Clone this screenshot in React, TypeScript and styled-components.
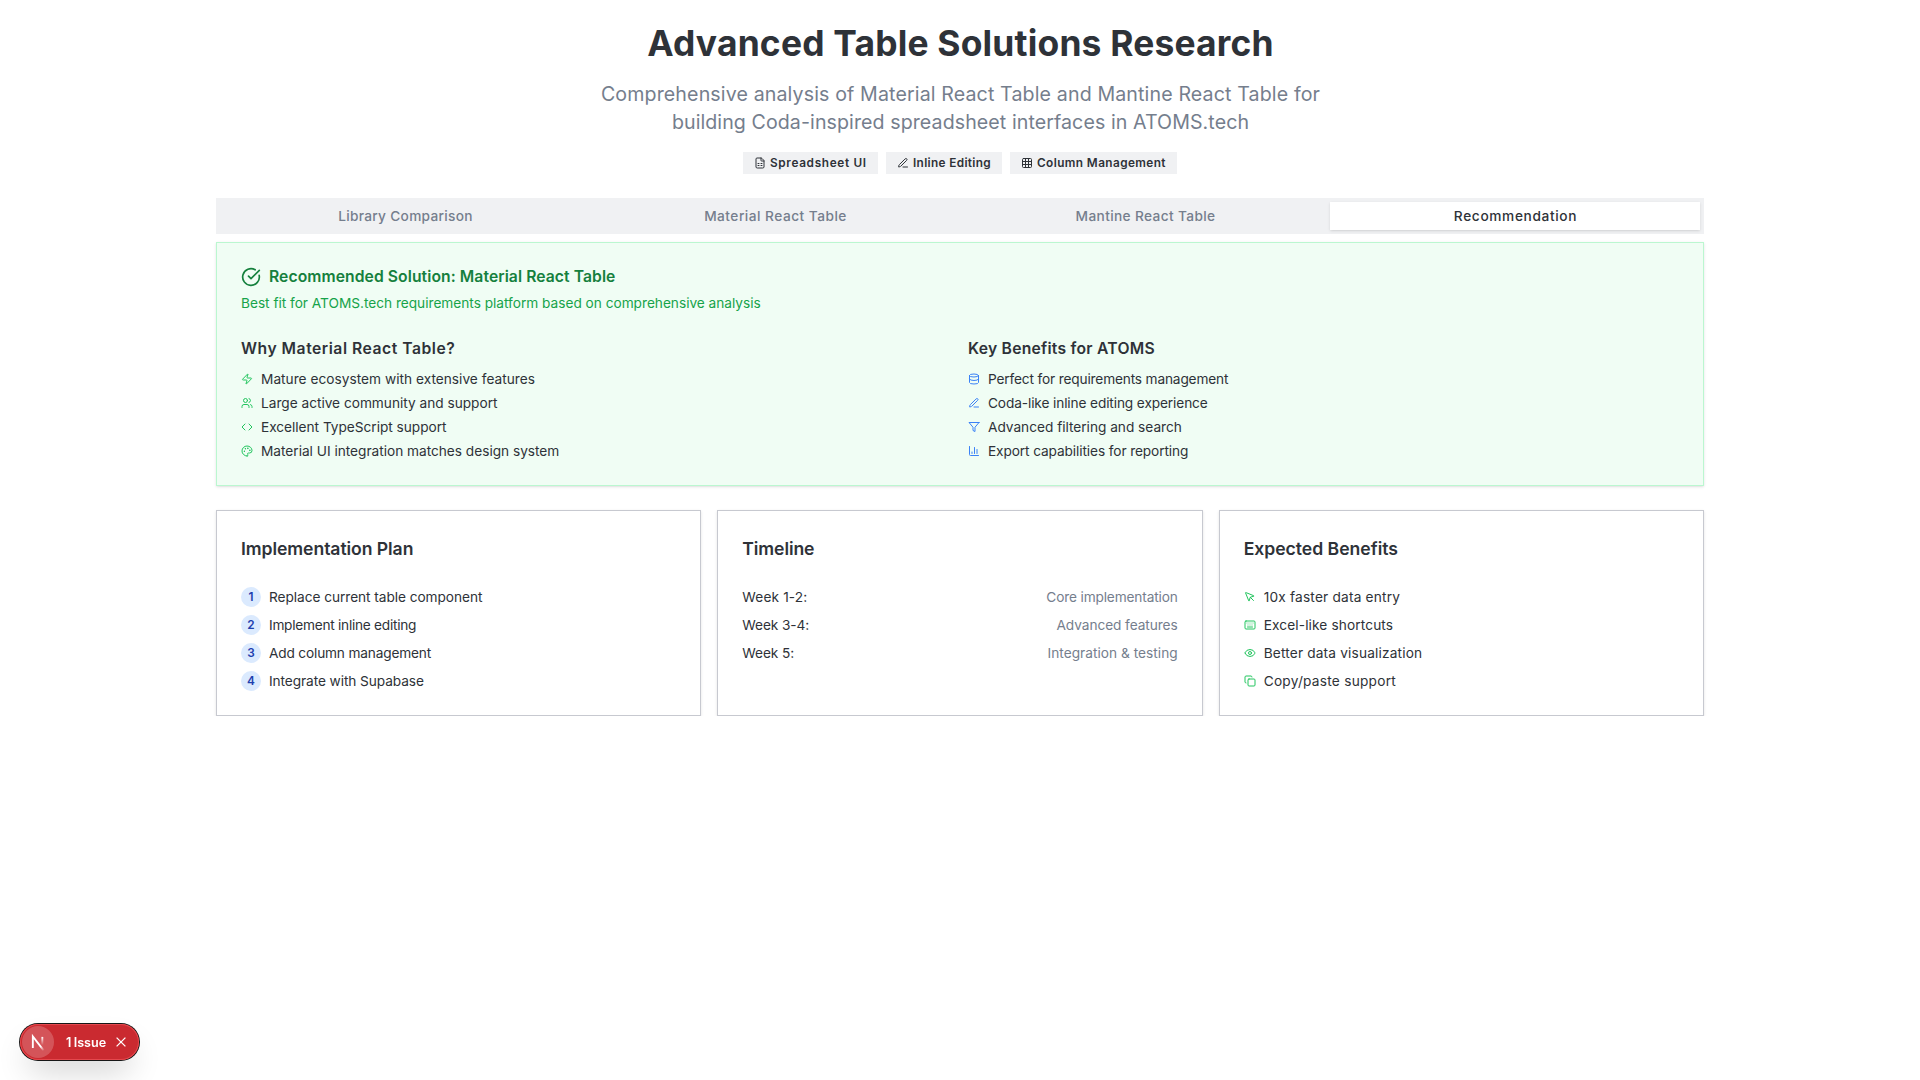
import React from "react";
import styled, { createGlobalStyle } from "styled-components";
import {
  ChartColumn,
  CircleCheckBig,
  Code,
  Copy,
  Database,
  Eye,
  FileSpreadsheet,
  Grid3x3,
  Keyboard,
  MousePointer,
  Palette,
  Users,
  Zap,
} from "lucide-react";

const GlobalStyle = createGlobalStyle`
  *, *::before, *::after { box-sizing: border-box; }
  body {
    margin: 0;
    background: #fff;
    color: #2e3238;
    font-family: Inter, "Liberation Sans", sans-serif;
  }
  h1, h2, h3, h4, p, ul, ol, dl, dd { margin: 0; padding: 0; }
  ul, ol { list-style: none; }
  button { font-family: inherit; border: 0; padding: 0; background: none; color: inherit; }
  svg { display: block; flex-shrink: 0; }
`;

const Page = styled.main`
  display: flex;
  flex-direction: column;
  width: 1488px;
  margin: 0 auto;
  padding-top: 24px;
`;

const Header = styled.header`
  display: flex;
  flex-direction: column;
  align-items: center;
  text-align: center;
`;

/* Text run with its own tracking, in pixels. */
const Tracked = styled.span<{ $track?: number }>`
  letter-spacing: ${(p) => p.$track ?? 0}px;
  white-space: nowrap;
`;

const Title = styled.h1`
  padding-left: 1px;
  font-size: 35.4px;
  line-height: 40px;
  font-weight: 700;
`;

const Subtitle = styled.p`
  display: flex;
  flex-direction: column;
  align-items: center;
  margin-top: 16px;
  padding-left: 1px;
  font-size: 19.6px;
  line-height: 28px;
  color: #757e8d;
`;

const Badges = styled.div`
  display: flex;
  gap: 8px;
  margin-top: 16px;
`;

const Badge = styled.span<{ $width: number }>`
  display: flex;
  align-items: center;
  gap: 4px;
  width: ${(p) => p.$width}px;
  height: 22px;
  padding: 0 11px;
  background: #f0f1f3;
  font-size: 11.8px;
  line-height: 16px;
  font-weight: 600;
`;

const TabList = styled.div`
  display: grid;
  grid-template-columns: repeat(4, 1fr);
  height: 36px;
  margin-top: 24px;
  padding: 4px;
  background: #f0f1f3;
`;

const Tab = styled.button<{ $active?: boolean }>`
  padding-left: 1px;
  font-size: 13.7px;
  line-height: 20px;
  font-weight: 500;
  color: ${(p) => (p.$active ? "#2e3238" : "#757e8d")};
  background: ${(p) => (p.$active ? "#fff" : "transparent")};
  box-shadow: ${(p) =>
    p.$active ? "0 1px 3px rgba(0,0,0,.1), 0 1px 2px -1px rgba(0,0,0,.1)" : "none"};
`;

const Panel = styled.section`
  height: 244px;
  margin-top: 8px;
  padding: 24px;
  border: 1px solid #bbf7d0;
  background: #f0fdf4;
  box-shadow: 0 1px 3px rgba(0, 0, 0, 0.1), 0 1px 2px -1px rgba(0, 0, 0, 0.1);
`;

const PanelTitle = styled.h2`
  display: flex;
  align-items: center;
  gap: 8px;
  height: 20px;
  font-size: 15.7px;
  line-height: 20px;
  font-weight: 600;
  color: #15803d;
`;

const PanelNote = styled.p`
  margin-top: 6px;
  font-size: 13.7px;
  line-height: 20px;
  color: #16a34a;
`;

const PanelColumns = styled.div`
  display: grid;
  grid-template-columns: 1fr 1fr;
  gap: 16px;
  margin-top: 24px;
`;

const ColumnTitle = styled.h3`
  font-size: 15.7px;
  line-height: 24px;
  font-weight: 600;
`;

const List = styled.ul<{ $gap: number; $top: number }>`
  display: flex;
  flex-direction: column;
  gap: ${(p) => p.$gap}px;
  margin-top: ${(p) => p.$top}px;
`;

const Item = styled.li<{ $tone?: string }>`
  display: flex;
  align-items: center;
  gap: 8px;
  height: 20px;
  font-size: 13.7px;
  line-height: 20px;
  svg { color: ${(p) => p.$tone ?? "inherit"}; }
`;

const Cards = styled.div`
  display: grid;
  grid-template-columns: repeat(3, 1fr);
  gap: 16px;
  margin-top: 24px;
`;

const Card = styled.section`
  height: 206px;
  padding: 24px;
  border: 1px solid #c7c9d0;
  background: #fff;
  box-shadow: 0 1px 3px rgba(0, 0, 0, 0.1), 0 1px 2px -1px rgba(0, 0, 0, 0.1);
`;

const CardTitle = styled.h3`
  font-size: 17.6px;
  line-height: 28px;
  font-weight: 600;
`;

const StepNumber = styled.span`
  display: flex;
  align-items: center;
  justify-content: center;
  width: 20px;
  height: 20px;
  border-radius: 50%;
  background: #dbeafe;
  color: #1e40af;
  font-size: 11.8px;
  font-weight: 600;
`;

const ScheduleItem = styled(Item)`
  justify-content: space-between;
`;

const Task = styled(Tracked)`
  color: #757e8d;
`;

const IssueToast = styled.div`
  position: fixed;
  left: 20px;
  bottom: 20px;
  display: flex;
  align-items: center;
  width: 119px;
  height: 36px;
  padding: 2px;
  border-radius: 18px;
  background: #ca2a30;
  color: #fff;
  box-shadow: 0 0 0 1px #171717, inset 0 0 0 1px #e5484d, 0 16px 32px -8px rgba(0, 0, 0, 0.24);
`;

const LogoButton = styled.button`
  width: 32px;
  height: 32px;
  border-radius: 50%;
  background: rgba(255, 255, 255, 0.2);
`;

const IssueLabel = styled.span`
  margin-left: 12px;
  width: 41px;
  padding-top: 1px;
  font-size: 12.6px;
  line-height: 20px;
  font-weight: 600;
  word-spacing: -0.8px;
  white-space: nowrap;
`;

const CloseButton = styled.button`
  margin-left: 7px;
`;

type Entry = { text: string; track: number; icon?: React.ReactNode };

const PenIcon = () => (
  <svg width="12" height="12" viewBox="0 0 24 24" fill="none" stroke="currentColor" strokeWidth="2" strokeLinecap="round" strokeLinejoin="round">
    <path d="M12 20h9" />
    <path d="M16.376 3.622a1 1 0 0 1 3.002 3.002L7.368 18.635a2 2 0 0 1-.855.506l-2.872.838a.5.5 0 0 1-.62-.62l.838-2.872a2 2 0 0 1 .506-.854z" />
  </svg>
);

const FilterIcon = () => (
  <svg width="12" height="12" viewBox="0 0 24 24" fill="none" stroke="currentColor" strokeWidth="2" strokeLinecap="round" strokeLinejoin="round">
    <polygon points="22 3 2 3 10 12.46 10 19 14 21 14 12.46 22 3" />
  </svg>
);

const LogoIcon = () => (
  <svg width="32" height="32" viewBox="0 0 32 32" fill="none">
    <defs>
      <linearGradient id="diagonal" x1="9.96" y1="11.12" x2="15.48" y2="17.97" gradientUnits="userSpaceOnUse">
        <stop stopColor="#fff" />
        <stop offset="0.604" stopColor="#fff" stopOpacity="0" />
      </linearGradient>
      <linearGradient id="upright" x1="11.82" y1="1.4" x2="11.79" y2="9.63" gradientUnits="userSpaceOnUse">
        <stop stopColor="#fff" />
        <stop offset="1" stopColor="#fff" stopOpacity="0" />
      </linearGradient>
    </defs>
    <g transform="translate(8.5 9.4)" strokeWidth="1.86">
      <path d="M13.3 15.2 L2.34 1 V12.6" stroke="url(#diagonal)" />
      <path d="M11.825 1.5 V13.1" stroke="url(#upright)" />
    </g>
  </svg>
);

const badges = [
  { text: "Spreadsheet UI", track: 0.66, width: 135, icon: <FileSpreadsheet size={12} /> },
  { text: "Inline Editing", track: 0.34, width: 116, icon: <PenIcon /> },
  { text: "Column Management", track: 0.41, width: 167, icon: <Grid3x3 size={12} /> },
];

const tabs = [
  { text: "Library Comparison", track: 0.3 },
  { text: "Material React Table", track: 0.48 },
  { text: "Mantine React Table", track: 0.36 },
  { text: "Recommendation", track: 0.64, active: true },
];

const reasons: Entry[] = [
  { text: "Mature ecosystem with extensive features", track: 0.015, icon: <Zap size={12} /> },
  { text: "Large active community and support", track: -0.017, icon: <Users size={12} /> },
  { text: "Excellent TypeScript support", track: -0.033, icon: <Code size={12} /> },
  { text: "Material UI integration matches design system", track: -0.02, icon: <Palette size={12} /> },
];

const keyBenefits: Entry[] = [
  { text: "Perfect for requirements management", track: -0.166, icon: <Database size={12} /> },
  { text: "Coda-like inline editing experience", track: -0.125, icon: <PenIcon /> },
  { text: "Advanced filtering and search", track: -0.02, icon: <FilterIcon /> },
  { text: "Export capabilities for reporting", track: -0.113, icon: <ChartColumn size={12} /> },
];

const steps: Entry[] = [
  { text: "Replace current table component", track: -0.058 },
  { text: "Implement inline editing", track: -0.271 },
  { text: "Add column management", track: -0.18 },
  { text: "Integrate with Supabase", track: -0.09 },
];

const schedule = [
  { week: "Week 1-2:", weekTrack: 0.142, task: "Core implementation", track: -0.157 },
  { week: "Week 3-4:", weekTrack: -0.088, task: "Advanced features", track: -0.079 },
  { week: "Week 5:", weekTrack: -0.072, task: "Integration & testing", track: 0.02 },
];

const outcomes: Entry[] = [
  { text: "10x faster data entry", track: 0.2, icon: <MousePointer size={12} /> },
  { text: "Excel-like shortcuts", track: 0.115, icon: <Keyboard size={12} /> },
  { text: "Better data visualization", track: 0.165, icon: <Eye size={12} /> },
  { text: "Copy/paste support", track: 0.25, icon: <Copy size={12} /> },
];

const IconList = ({ items, tone, gap, top }: { items: Entry[]; tone: string; gap: number; top: number }) => (
  <List $gap={gap} $top={top}>
    {items.map((item) => (
      <Item key={item.text} $tone={tone}>
        {item.icon}
        <Tracked $track={item.track}>{item.text}</Tracked>
      </Item>
    ))}
  </List>
);

export default function App() {
  return (
    <>
      <GlobalStyle />
      <Page>
        <Header>
          <Title>
            <Tracked $track={0.19}>Advanced Table Solutions Research</Tracked>
          </Title>
          <Subtitle>
            <Tracked $track={0.13}>
              Comprehensive analysis of Material React Table and Mantine React Table for
            </Tracked>
            <Tracked $track={0.085}>building Coda-inspired spreadsheet interfaces in ATOMS.tech</Tracked>
          </Subtitle>
          <Badges>
            {badges.map((b) => (
              <Badge key={b.text} $width={b.width}>
                {b.icon}
                <Tracked $track={b.track}>{b.text}</Tracked>
              </Badge>
            ))}
          </Badges>
        </Header>

        <TabList role="tablist">
          {tabs.map((t) => (
            <Tab key={t.text} role="tab" $active={t.active}>
              <Tracked $track={t.track}>{t.text}</Tracked>
            </Tab>
          ))}
        </TabList>

        <Panel>
          <PanelTitle>
            <CircleCheckBig size={20} />
            <Tracked $track={0.075}>Recommended Solution: Material React Table</Tracked>
          </PanelTitle>
          <PanelNote>
            <Tracked $track={-0.022}>
              Best fit for ATOMS.tech requirements platform based on comprehensive analysis
            </Tracked>
          </PanelNote>
          <PanelColumns>
            <div>
              <ColumnTitle>
                <Tracked $track={0.52}>Why Material React Table?</Tracked>
              </ColumnTitle>
              <IconList items={reasons} tone="#22c55e" gap={4} top={8} />
            </div>
            <div>
              <ColumnTitle>
                <Tracked $track={0.25}>Key Benefits for ATOMS</Tracked>
              </ColumnTitle>
              <IconList items={keyBenefits} tone="#3b82f6" gap={4} top={8} />
            </div>
          </PanelColumns>
        </Panel>

        <Cards>
          <Card>
            <CardTitle>
              <Tracked $track={-0.07}>Implementation Plan</Tracked>
            </CardTitle>
            <List as="ol" $gap={8} $top={24}>
              {steps.map((s, i) => (
                <Item key={s.text}>
                  <StepNumber>{i + 1}</StepNumber>
                  <Tracked $track={s.track}>{s.text}</Tracked>
                </Item>
              ))}
            </List>
          </Card>
          <Card>
            <CardTitle>
              <Tracked $track={-0.1}>Timeline</Tracked>
            </CardTitle>
            <List $gap={8} $top={24}>
              {schedule.map((s) => (
                <ScheduleItem key={s.week}>
                  <Tracked $track={s.weekTrack}>{s.week}</Tracked>
                  <Task $track={s.track}>{s.task}</Task>
                </ScheduleItem>
              ))}
            </List>
          </Card>
          <Card>
            <CardTitle>
              <Tracked $track={-0.02}>Expected Benefits</Tracked>
            </CardTitle>
            <IconList items={outcomes} tone="#22c55e" gap={8} top={24} />
          </Card>
        </Cards>
      </Page>

      <IssueToast>
        <LogoButton aria-label="Open tools">
          <LogoIcon />
        </LogoButton>
        <IssueLabel>1 Issue</IssueLabel>
        <CloseButton aria-label="Close">
          <svg width="14" height="14" viewBox="0 0 14 14" fill="none" stroke="#fff" strokeWidth="1.3">
            <path d="M2.6 2.6 11.4 11.4M11.4 2.6 2.6 11.4" />
          </svg>
        </CloseButton>
      </IssueToast>
    </>
  );
}
